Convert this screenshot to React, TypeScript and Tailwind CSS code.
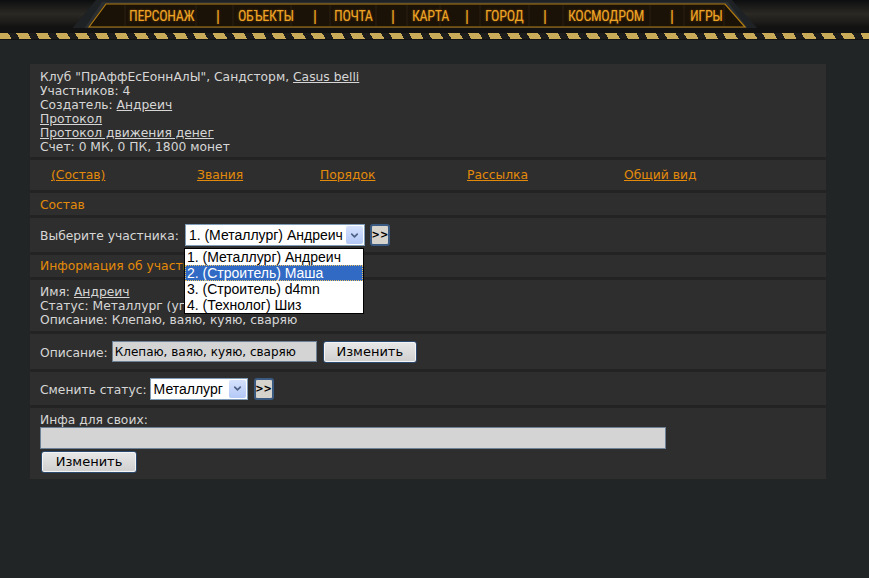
import { ChevronDown } from "lucide-react";

const navItems = ["ПЕРСОНАЖ", "ОБЪЕКТЫ", "ПОЧТА", "КАРТА", "ГОРОД", "КОСМОДРОМ", "ИГРЫ"];
const navLeft = [129, 238, 334, 412, 485, 568, 690];
const sepLeft = [216, 313, 391, 465, 543, 670];

const tabs = [
  { label: "(Состав)", w: "w-[146px]" },
  { label: "Звания", w: "w-[123px]" },
  { label: "Порядок", w: "w-[147px]" },
  { label: "Рассылка", w: "w-[157px]" },
  { label: "Общий вид", w: "w-[120px]" },
];

const members = [
  "1. (Металлург) Андреич",
  "2. (Строитель) Маша",
  "3. (Строитель) d4mn",
  "4. (Технолог) Шиз",
];

const Select = ({ value, className }: { value: string; className: string }) => (
  <div
    className={`flex h-[22px] items-center border border-[#7f9db9] bg-white pl-[3px] pr-px font-['Liberation_Sans',Arial,sans-serif] text-[14px] text-black ${className}`}
  >
    <span className="flex-1 whitespace-nowrap leading-none">{value}</span>
    <span className="flex h-[18px] w-[17px] items-center justify-center rounded-[2px] bg-[linear-gradient(#d6e2fd,#b3c8f7)]">
      <ChevronDown size={11} strokeWidth={3.5} className="text-[#4d6185]" />
    </span>
  </div>
);

const GoButton = () => (
  <div className="flex h-[22px] w-[20px] items-center justify-center rounded-[3px] border-2 border-[#3b5a82] bg-[#d6d3cc] font-['DejaVu_Sans',sans-serif] text-[10px] font-bold leading-none text-black">
    &gt;&gt;
  </div>
);

const ChangeButton = ({ className }: { className: string }) => (
  <div
    className={`flex h-[22px] items-center justify-center rounded-[3px] border border-[#2c4a6e] bg-[linear-gradient(#e8e8e8,#cfcfcf)] text-[13px] text-black shadow-[inset_0_0_0_1px_#f4f4f4] ${className}`}
  >
    Изменить
  </div>
);

const Row = ({ children, className }: { children: React.ReactNode; className: string }) => (
  <div className={`border-b-[3px] border-[#232323] px-[10px] ${className}`}>{children}</div>
);

const App = () => {
  return (
    <div className="relative min-h-screen w-[869px] overflow-hidden bg-[#222526] font-['DejaVu_Sans',Verdana,sans-serif] text-[12.3px] leading-[14px] text-[#d6d6d6]">
      {/* header */}
      <div className="relative h-[40px] bg-[linear-gradient(#0d0e0f_0px,#1a1a19_6px,#2b2924_14px,#1d1c1a_22px,#0e0e0e_29px)]">
        <svg className="absolute left-0 top-0" width="869" height="32" viewBox="0 0 869 32">
          <polygon points="70,31 96,0 732,0 760,31" fill="#1f2224" />
          <polygon points="84,29 102,2 728,2 748,29" fill="#2c2f31" />
          <polygon points="89,27 106,4 725,4 745,27" fill="#1b1207" stroke="#b07a10" strokeWidth="1.2" />
          {[125, 196, 233, 291, 330, 376, 407, 440, 480, 529, 563, 650, 684, 724].map((x) => (
            <line key={x} x1={x} y1="5" x2={x} y2="26" stroke="#2a1f10" strokeWidth="1" />
          ))}
        </svg>
        <div className="absolute left-0 top-[32px] h-[8px] w-full border-y border-[#111] bg-[repeating-linear-gradient(60deg,#c8aa58_0px,#c8aa58_10px,#1c1c1c_10px,#1c1c1c_17px)]" />
        <div className="absolute left-0 top-[28px] h-[4px] w-full bg-[#121212]" />
        {navItems.map((item, i) => (
          <span
            key={item}
            className="absolute top-[7px] font-['Liberation_Sans_Narrow','Roboto_Condensed','Liberation_Sans',sans-serif] text-[14px] leading-[18px] tracking-[-0.3px] text-[#eea426] [text-shadow:0_0_2px_#8a5408]"
            style={{ left: navLeft[i] }}
          >
            {item}
          </span>
        ))}
        {sepLeft.map((x) => (
          <span
            key={x}
            className="absolute top-[7px] font-['Liberation_Sans',sans-serif] text-[15px] leading-[18px] text-[#eea426] [text-shadow:0_0_2px_#8a5408]"
            style={{ left: x }}
          >
            |
          </span>
        ))}
      </div>

      {/* panel */}
      <div className="ml-[30px] mt-[24px] w-[796px] bg-[#2e2e2e]">
        <Row className="pb-[3px] pt-[6px]">
          <div>
            Клуб "ПрАффЕсЕоннАлЫ", Сандсторм, <span className="underline">Casus belli</span>
          </div>
          <div>Участников: 4</div>
          <div>
            Создатель: <span className="underline">Андреич</span>
          </div>
          <div className="underline">Протокол</div>
          <div className="underline">Протокол движения денег</div>
          <div>Счет: 0 МК, 0 ПК, 1800 монет</div>
        </Row>

        <div className="flex h-[33px] items-center border-b-[3px] border-[#232323] pl-[21px] text-[#e38a0a]">
          {tabs.map((t) => (
            <div key={t.label} className={t.w}>
              <span className="underline">{t.label}</span>
            </div>
          ))}
        </div>

        <Row className="flex h-[25px] items-center pt-px text-[#e38a0a]">Состав</Row>

        <Row className="relative flex h-[37px] items-center">
          <span className="mr-[6px] pt-[2px]">Выберите участника:</span>
          <Select value="1. (Металлург) Андреич" className="w-[180px]" />
          <div className="ml-[5px]">
            <GoButton />
          </div>
          <div className="absolute left-[154px] top-[30px] z-10 w-[180px] border border-black bg-white font-['Liberation_Sans',Arial,sans-serif] text-[14px] leading-[16px] text-black">
            {members.map((m, i) => (
              <div
                key={m}
                className={`h-[16px] whitespace-nowrap pl-[2px] ${
                  i === 1 ? "bg-[#316ac5] text-white outline-1 outline-dotted outline-offset-[-1px] outline-[#e8c060]" : ""
                }`}
              >
                {m}
              </div>
            ))}
          </div>
        </Row>

        <Row className="flex h-[25px] items-center text-[#e38a0a]">Информация об участнике</Row>

        <Row className="pb-[4px] pt-[5px]">
          <div>
            Имя: <span className="underline">Андреич</span>
          </div>
          <div>Статус: Металлург (уп</div>
          <div>Описание: Клепаю, ваяю, куяю, сваряю</div>
        </Row>

        <Row className="flex h-[38px] items-center">
          <span className="mr-[4px] pt-[2px]">Описание:</span>
          <div className="flex h-[21px] w-[205px] items-center border border-[#6d8196] bg-[#d4d4d4] pl-[2px] text-[12px] text-black">
            Клепаю, ваяю, куяю, сваряю
          </div>
          <ChangeButton className="ml-[6px] w-[94px]" />
        </Row>

        <Row className="flex h-[36px] items-center">
          <span className="mr-[3px] pt-[3px]">Сменить статус:</span>
          <Select value="Металлург" className="w-[98px]" />
          <div className="ml-[6px]">
            <GoButton />
          </div>
        </Row>

        <div className="px-[10px] pb-[6px] pt-[5px]">
          <div>Инфа для своих:</div>
          <div className="h-[22px] w-[626px] border border-[#6d8196] bg-[#d4d4d4]" />
          <ChangeButton className="ml-px mt-[2px] w-[96px]" />
        </div>
      </div>
    </div>
  );
};

export default App;
